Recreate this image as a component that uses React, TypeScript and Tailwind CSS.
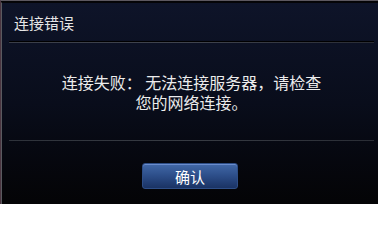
import React from "react";

export default function App() {
  return (
    <div
      className="w-[378px] h-[204px] overflow-hidden bg-[#040406] border-t-[1px] border-t-[#5c5860] border-l-[1px] border-l-[#4a3540] flex flex-col"
      style={{ fontFamily: '"Noto Sans CJK SC", "Noto Sans", sans-serif' }}
    >
      <div className="w-[380px] flex-1 mt-[1px] border-l-[1px] border-l-[#5a5a60] border-t-[1px] border-t-[#050508] bg-[#040406] bg-gradient-to-b from-[#0e1429] via-[#090d1b] to-[#040406] flex flex-col">
        <div className="h-[38px] flex items-center pl-[12px] text-[15px] text-[#e6e6e6] leading-none">
          连接错误
        </div>
        <div className="mx-[7px] h-[1px] bg-[#000000]" />
        <div className="mx-[7px] h-[1px] bg-gradient-to-r from-[#3a3e48] via-[#40444e] to-[#2a2d35]" />
        <div className="h-[97px] pt-[29px] text-center text-[16px] leading-[20px] text-[#ececec]">
          <div>连接失败： 无法连接服务器，请检查</div>
          <div>您的网络连接。</div>
        </div>
        <div className="mx-[7px] h-[1px] bg-gradient-to-r from-[#2e323a] via-[#383c44] to-[#2a2d35]" />
        <div className="flex-1 flex justify-center pt-[22px] pr-[3px]">
          <button className="w-[96px] h-[26px] rounded-[3px] border border-[#2e4e86] bg-gradient-to-b from-[#4269a8] via-[#2c4d88] to-[#1a3364] text-[15px] text-white leading-none flex items-center justify-center shadow-[inset_0_1px_0_#6a8ccc]">
            确认
          </button>
        </div>
      </div>
    </div>
  );
}
